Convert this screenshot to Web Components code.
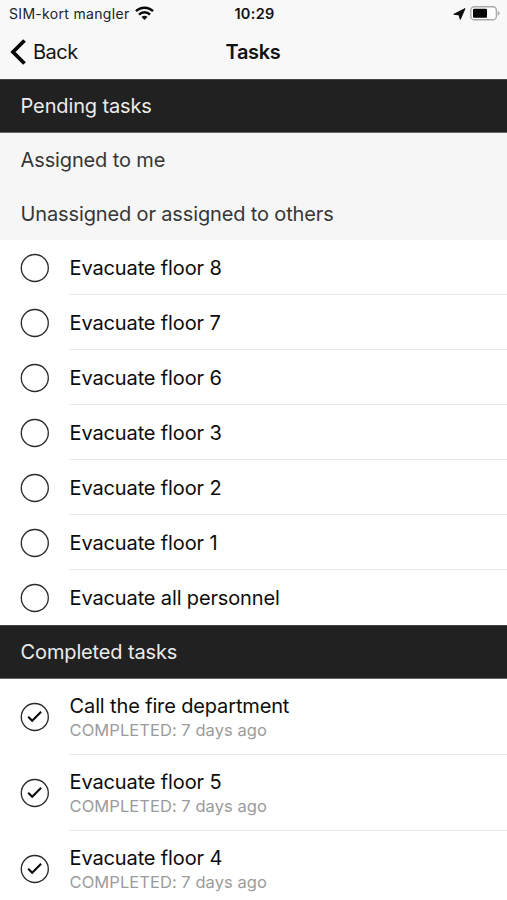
<!DOCTYPE html>
<html lang="en">
<head>
<meta charset="utf-8">
<title>Tasks</title>
<style>
html,body{margin:0;height:100%;overflow:hidden;background:#fff}
body{font-family:Inter,"Liberation Sans",sans-serif;color:#0c0c0c}
</style>
</head>
<body>
<task-screen></task-screen>
<script>
const define = (name, html, setup) => {
  const template = document.createElement('template');
  template.innerHTML = html;
  customElements.define(name, class extends HTMLElement {
    constructor() {
      super();
      this.attachShadow({ mode: 'open' }).append(template.content.cloneNode(true));
    }
    connectedCallback() { if (setup) setup(this, this.shadowRoot); }
  });
};

define('status-bar', `
<style>
:host{display:grid;grid-template-columns:1fr auto 1fr;align-items:center;height:27px;padding:0 7px 0 9px;color:#222}
.left,.right{display:flex;align-items:center}
.left{font-size:14px;letter-spacing:.32px;gap:5px;white-space:nowrap}
.time{font-size:14.5px;font-weight:600;letter-spacing:.3px;color:#111}
.right{justify-content:flex-end;gap:4px}
svg{display:block}
.wifi{margin-top:-2px}
</style>
<div class="left"><span>SIM-kort mangler</span>
<svg class="wifi" width="19" height="14" viewBox="0 0 19 14" fill="none" stroke="#080808" stroke-width="2.5"><path d="M1 5.2a12 12 0 0 1 17 0M4 8.6a7.800 7.800 0 0 1 11 0"/><path d="M9.500 14 6.500 11a4.200 4.200 0 0 1 6 0z" fill="#080808" stroke="none"/></svg></div>
<span class="time">10:29</span>
<div class="right">
<svg width="13" height="12" viewBox="0 0 13 12"><path d="M12 .6 7.300 11.400 6 6.900.8 6.300z" fill="#080808" stroke="#080808" stroke-width=".9" stroke-linejoin="round"/></svg>
<svg width="30" height="15" viewBox="0 0 30 15"><rect x=".8" y=".8" width="25.600" height="13" rx="3.600" fill="#fff" stroke="#aaa" stroke-width="1.400"/><rect x="3" y="2.800" width="14" height="9" rx="1" fill="#050505"/><path d="M27.800 5c2.400.7 2.400 4 0 4.800z" fill="#aaa"/></svg>
</div>`);

define('nav-bar', `
<style>
:host{display:grid;grid-template-columns:1fr auto 1fr;align-items:center;height:50px;padding:0 11px 2px 10px}
.back{display:flex;align-items:center;gap:7px;font-size:20px;letter-spacing:-.5px;color:#151515}
h1{margin:0;font-size:20px;font-weight:600;letter-spacing:-.35px;color:#111}
svg{display:block;margin-top:-1px}
</style>
<div class="back"><svg width="16" height="26" viewBox="0 0 16 26" fill="none" stroke="#080808" stroke-width="3.800"><path d="M14.500 1.500 3 13 14.500 24.500"/></svg><slot name="back"></slot></div>
<h1><slot></slot></h1>`);

define('section-title', `
<style>
:host{display:flex;align-items:center;box-sizing:border-box;height:54px;padding:0 20.600px;background:#212121;color:#ececec;font-size:20px;letter-spacing:-.14px;border-top:1px solid #444;border-bottom:1px solid #666}
</style><slot></slot>`);

define('group-title', `
<style>
:host{display:flex;align-items:center;box-sizing:border-box;height:53.500px;padding:1px 20.600px 0;background:#f6f6f6;color:#363636;font-size:20px;letter-spacing:-.14px}
</style><slot></slot>`);

define('task-mark', `
<style>
:host{display:block;width:30px;height:30px;flex:none}
svg{display:block}
path{display:none}
:host([done]) path{display:block}
</style>
<svg width="30" height="30" viewBox="0 0 30 30" fill="none" stroke="#2b2b2b"><circle cx="14.800" cy="15" r="13.500" stroke-width="1.350"/><path d="M8.200 14.800l4 4 8.900-9" stroke="#080808" stroke-width="2"/></svg>`);

define('task-row', `
<style>
:host{display:flex;align-items:stretch;height:55px;padding-left:20px;background:#fff}
:host([done]){height:76px}
task-mark{align-self:center;margin-right:19px;margin-top:1px}
:host([done]) task-mark{margin-top:-1px}
.body{flex:1;display:flex;flex-direction:column;justify-content:center;box-sizing:border-box;border-bottom:1.500px solid #e9e9e9;padding-top:1px}
:host([last]) .body{border-bottom-color:transparent}
.title,.note{padding-left:.6px}
.title{font-size:20px;line-height:26px;letter-spacing:-.14px;color:#0c0c0c}
.note{display:none;font-size:16.500px;line-height:23px;letter-spacing:.05px;color:#9b9b9b}
:host([done]) .note{display:block}
:host([done]) .body{padding-top:2px}
</style>
<task-mark></task-mark>
<div class="body"><div class="title"><slot></slot></div><div class="note"><slot name="note"></slot></div></div>`,
(host, root) => root.querySelector('task-mark').toggleAttribute('done', host.hasAttribute('done')));

define('task-screen', `
<style>
:host{display:flex;flex-direction:column;height:900px;overflow:hidden}
header{background:#f8f8f8;flex:none}
task-row,section-title,group-title{flex:none}
</style>
<header><status-bar></status-bar><nav-bar><span slot="back">Back</span>Tasks</nav-bar></header>
<section-title>Pending tasks</section-title>
<group-title>Assigned to me</group-title>
<group-title>Unassigned or assigned to others</group-title>
<task-row>Evacuate floor 8</task-row>
<task-row>Evacuate floor 7</task-row>
<task-row>Evacuate floor 6</task-row>
<task-row>Evacuate floor 3</task-row>
<task-row>Evacuate floor 2</task-row>
<task-row>Evacuate floor 1</task-row>
<task-row last>Evacuate all personnel</task-row>
<section-title>Completed tasks</section-title>
<task-row done>Call the fire department<span slot="note">COMPLETED: 7 days ago</span></task-row>
<task-row done>Evacuate floor 5<span slot="note">COMPLETED: 7 days ago</span></task-row>
<task-row done>Evacuate floor 4<span slot="note">COMPLETED: 7 days ago</span></task-row>`);
</script>
</body>
</html>
